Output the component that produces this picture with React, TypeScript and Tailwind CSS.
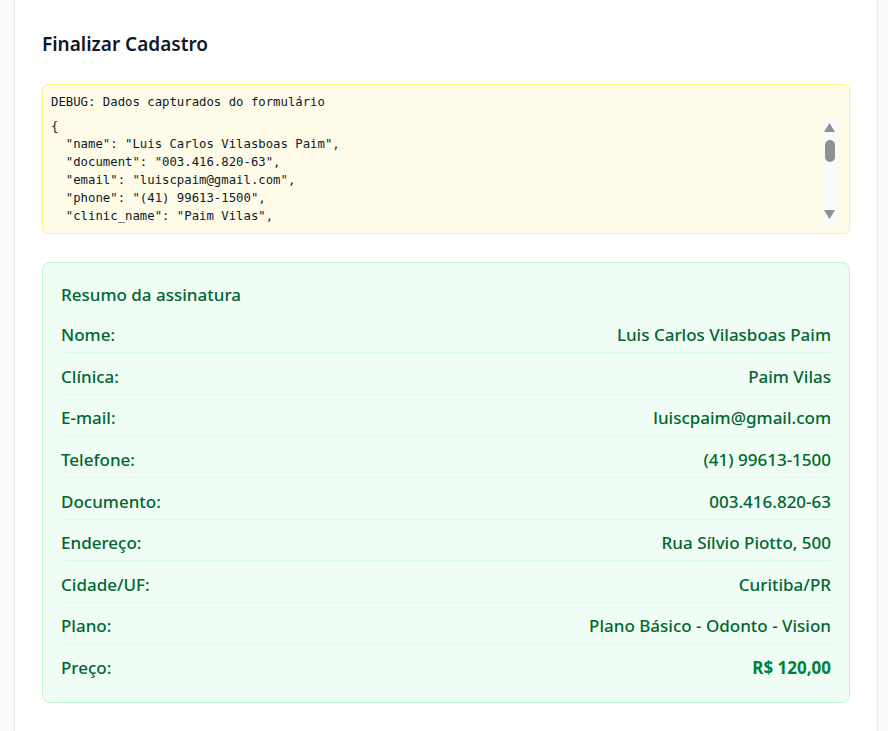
const debugData = {
  name: "Luis Carlos Vilasboas Paim",
  document: "003.416.820-63",
  email: "luiscpaim@gmail.com",
  phone: "(41) 99613-1500",
  clinic_name: "Paim Vilas",
  address: "Rua Sílvio Piotto, 500",
  city: "Curitiba",
  state: "PR",
  plan_id: "basico-odonto-vision",
  plan_name: "Plano Básico - Odonto - Vision",
  price: 120,
};

const rows = [
  { label: "Nome:", value: "Luis Carlos Vilasboas Paim" },
  { label: "Clínica:", value: "Paim Vilas" },
  { label: "E-mail:", value: "luiscpaim@gmail.com" },
  { label: "Telefone:", value: "(41) 99613-1500" },
  { label: "Documento:", value: "003.416.820-63" },
  { label: "Endereço:", value: "Rua Sílvio Piotto, 500" },
  { label: "Cidade/UF:", value: "Curitiba/PR" },
  { label: "Plano:", value: "Plano Básico - Odonto - Vision" },
];

function ScrollArrow({ down }: { down?: boolean }) {
  return (
    <svg width="11" height="9" viewBox="0 0 11 9" className="shrink-0">
      <polygon points={down ? "0,0 11,0 5.5,9" : "5.5,0 11,9 0,9"} fill="#909090" />
    </svg>
  );
}

export default function App() {
  return (
    <div className="min-h-[731px] bg-[#f9fafb] pl-[14px] pr-[10px] font-['Noto_Sans',sans-serif]">
      <div className="min-h-[731px] border-x border-gray-200 bg-white px-[27px] pt-[30px]">
        <h2 className="text-[19px] font-semibold leading-7 text-gray-900">Finalizar Cadastro</h2>

        {/* Debug */}
        <div className="mt-[26px] rounded-md border border-yellow-200 bg-yellow-50 p-2 pr-3">
          <p className="font-['DejaVu_Sans_Mono',monospace] text-[12.3px] leading-[18px] text-gray-900">
            DEBUG: Dados capturados do formulário
          </p>
          <div className="mt-1.5 flex h-[108px]">
            <pre className="flex-1 overflow-hidden font-['DejaVu_Sans_Mono',monospace] text-[12.3px] leading-[18px] text-gray-900">
              {JSON.stringify(debugData, null, 2)}
            </pre>
            {/* scrollbar */}
            <div className="flex w-[15px] flex-col items-center bg-[#fafafa] py-[6px]">
              <ScrollArrow />
              <div className="mt-[8px] h-[22px] w-[10px] rounded-full bg-[#909090]" />
              <div className="flex-1" />
              <ScrollArrow down />
            </div>
          </div>
        </div>

        {/* Resumo */}
        <div className="mt-7 rounded-lg border border-green-200 bg-green-50 px-[18px] pb-[17px] pt-5 text-green-800">
          <h3 className="text-[17px] font-medium leading-6">Resumo da assinatura</h3>
          <div className="mt-[4.7px]">
            {rows.map((r) => (
              <div
                key={r.label}
                className="flex items-center justify-between border-b border-green-100 pb-[3px] pt-[9.6px] text-[17px] font-medium leading-7"
              >
                <span>{r.label}</span>
                <span>{r.value}</span>
              </div>
            ))}
            <div className="flex items-center justify-between pb-[3px] pt-[9.6px] text-[17px] font-medium leading-7">
              <span>Preço:</span>
              <span className="font-bold text-green-700">R$ 120,00</span>
            </div>
          </div>
        </div>
      </div>
    </div>
  );
}
